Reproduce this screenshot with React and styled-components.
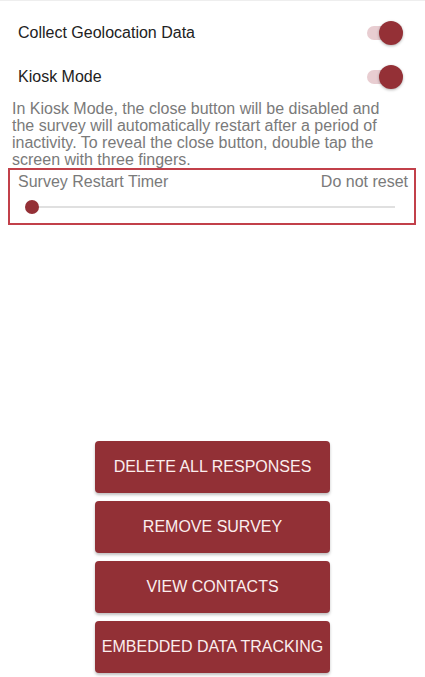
import styled, { createGlobalStyle } from 'styled-components'

const Global = createGlobalStyle`
  html, body {
    margin: 0;
    padding: 0;
    background: #fff;
    font-family: 'Liberation Sans', Arial, sans-serif;
  }
`

const Page = styled.div`
  width: 425px;
  height: 677px;
  display: flex;
  flex-direction: column;
  border-top: 1px solid #eee;
  box-sizing: border-box;
`

const Row = styled.div`
  display: flex;
  align-items: center;
  justify-content: space-between;
  height: 44px;
  padding: 0 22px 0 18px;
  margin-top: ${p => p.$first ? '10px' : '0'};
`

const Label = styled.span`
  font-size: 16px;
  color: #222;
`

const Toggle = styled.div`
  position: relative;
  width: 38px;
  height: 24px;
`

const Track = styled.div`
  position: absolute;
  left: 2px;
  top: 5px;
  width: 30px;
  height: 14px;
  border-radius: 7px;
  background: #e8cdd1;
`

const Thumb = styled.div`
  position: absolute;
  right: 0;
  top: 0;
  width: 24px;
  height: 24px;
  border-radius: 50%;
  background: #943036;
  box-shadow: 0 1px 3px rgba(0,0,0,0.3);
`

const Help = styled.p`
  margin: 1px 0 0;
  padding: 0 30px 0 12px;
  font-size: 16px;
  line-height: 17px;
  color: #7a7a7a;
`

const TimerBox = styled.div`
  margin: 0 9px 0 8px;
  height: 57px;
  border: 2px solid #c2404a;
  box-sizing: border-box;
  padding: 3px 6px 0 8px;
`

const TimerHead = styled.div`
  display: flex;
  justify-content: space-between;
  font-size: 16px;
  color: #7a7a7a;
`

const Slider = styled.div`
  position: relative;
  height: 16px;
  margin: 8px 13px 0 14px;
`

const SliderTrack = styled.div`
  position: absolute;
  left: 0;
  right: 0;
  top: 7px;
  height: 2px;
  background: #e0e0e0;
`

const SliderThumb = styled.div`
  position: absolute;
  left: -7px;
  top: 1px;
  width: 14px;
  height: 14px;
  border-radius: 50%;
  background: #943036;
`

const Buttons = styled.div`
  margin-top: auto;
  padding-bottom: 4px;
  display: flex;
  flex-direction: column;
  align-items: center;
  gap: 8px;
`

const Button = styled.button`
  width: 235px;
  height: 52px;
  border: none;
  border-radius: 4px;
  background: #923036;
  color: #fbeeee;
  font-family: 'Liberation Sans', Arial, sans-serif;
  font-size: 16px;
  text-transform: uppercase;
  box-shadow: 0 2px 3px rgba(0,0,0,0.25);
  cursor: pointer;
`

function Switch() {
  return (
    <Toggle>
      <Track />
      <Thumb />
    </Toggle>
  )
}

export default function App() {
  return (
    <>
      <Global />
      <Page>
        <Row $first>
          <Label>Collect Geolocation Data</Label>
          <Switch />
        </Row>
        <Row>
          <Label>Kiosk Mode</Label>
          <Switch />
        </Row>
        <Help>
          In Kiosk Mode, the close button will be disabled and the survey will automatically restart after a period of inactivity. To reveal the close button, double tap the screen with three fingers.
        </Help>
        <TimerBox>
          <TimerHead>
            <span>Survey Restart Timer</span>
            <span>Do not reset</span>
          </TimerHead>
          <Slider>
            <SliderTrack />
            <SliderThumb />
          </Slider>
        </TimerBox>
        <Buttons>
          <Button>Delete All Responses</Button>
          <Button>Remove Survey</Button>
          <Button>View Contacts</Button>
          <Button>Embedded Data Tracking</Button>
        </Buttons>
      </Page>
    </>
  )
}
